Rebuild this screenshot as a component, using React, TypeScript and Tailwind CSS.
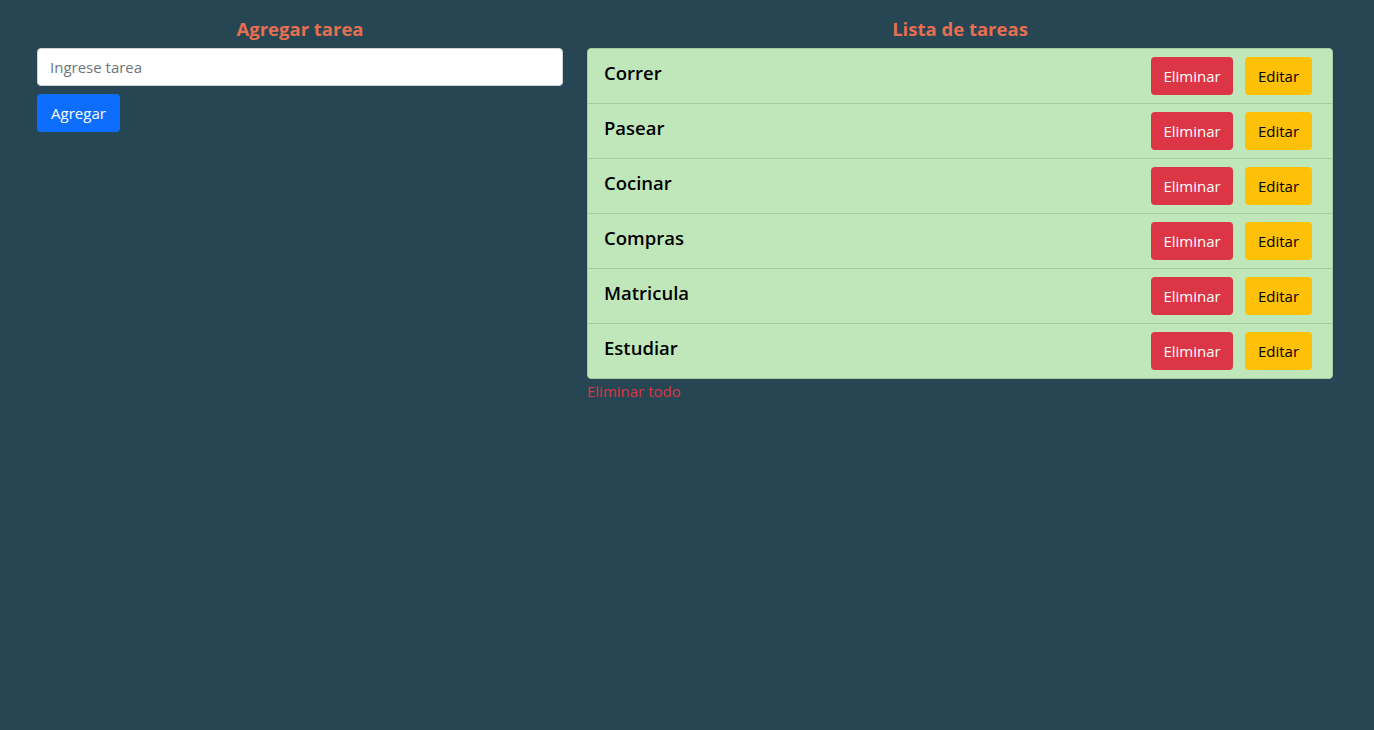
const tareas = ["Correr", "Pasear", "Cocinar", "Compras", "Matricula", "Estudiar"];

export default function App() {
  return (
    <div className="min-h-[730px] w-full bg-[#264653] font-['Open_Sans',sans-serif] text-[16px]">
      <div className="flex px-[25px] pt-[17px]">
        {/* Formulario */}
        <div className="w-[550px] px-[12px]">
          <h4 className="mb-[7px] text-center text-[18.5px] font-bold leading-[24px] text-[#e76f51]">
            Agregar tarea
          </h4>
          <input
            type="text"
            placeholder="Ingrese tarea"
            className="block h-[38px] w-full rounded-[4px] border border-[#ced4da] bg-white px-3 text-[15px] text-[#212529] placeholder:text-[#6c757d] outline-none"
          />
          <button className="mt-2 h-[38px] w-[83px] rounded-[4px] bg-[#0d6efd] text-[15px] text-white">
            Agregar
          </button>
        </div>

        {/* Lista */}
        <div className="w-[770px] px-[12px]">
          <h4 className="mb-[7px] text-center text-[18.5px] font-bold leading-[24px] text-[#e76f51]">
            Lista de tareas
          </h4>
          <ul className="overflow-hidden rounded-[4px] border border-[#a8cca2] bg-[#c0e7ba]">
            {tareas.map((t, i) => (
              <li
                key={t}
                className={
                  "flex items-center justify-between py-[8px] pl-[16px] pr-[20px] " +
                  (i > 0 ? "border-t border-[#a8cca2]" : "")
                }
              >
                <span className="-mt-[7px] text-[18.5px] font-semibold leading-[24px] text-black">{t}</span>
                <div className="flex gap-[12px]">
                  <button className="h-[38px] w-[82px] rounded-[4px] bg-[#dc3545] text-[15px] text-white">
                    Eliminar
                  </button>
                  <button className="h-[38px] w-[67px] rounded-[4px] bg-[#ffc107] text-[15px] text-black">
                    Editar
                  </button>
                </div>
              </li>
            ))}
          </ul>
          <button className="block text-[15px] leading-[24px] text-[#dc3545]">Eliminar todo</button>
        </div>
      </div>
    </div>
  );
}
